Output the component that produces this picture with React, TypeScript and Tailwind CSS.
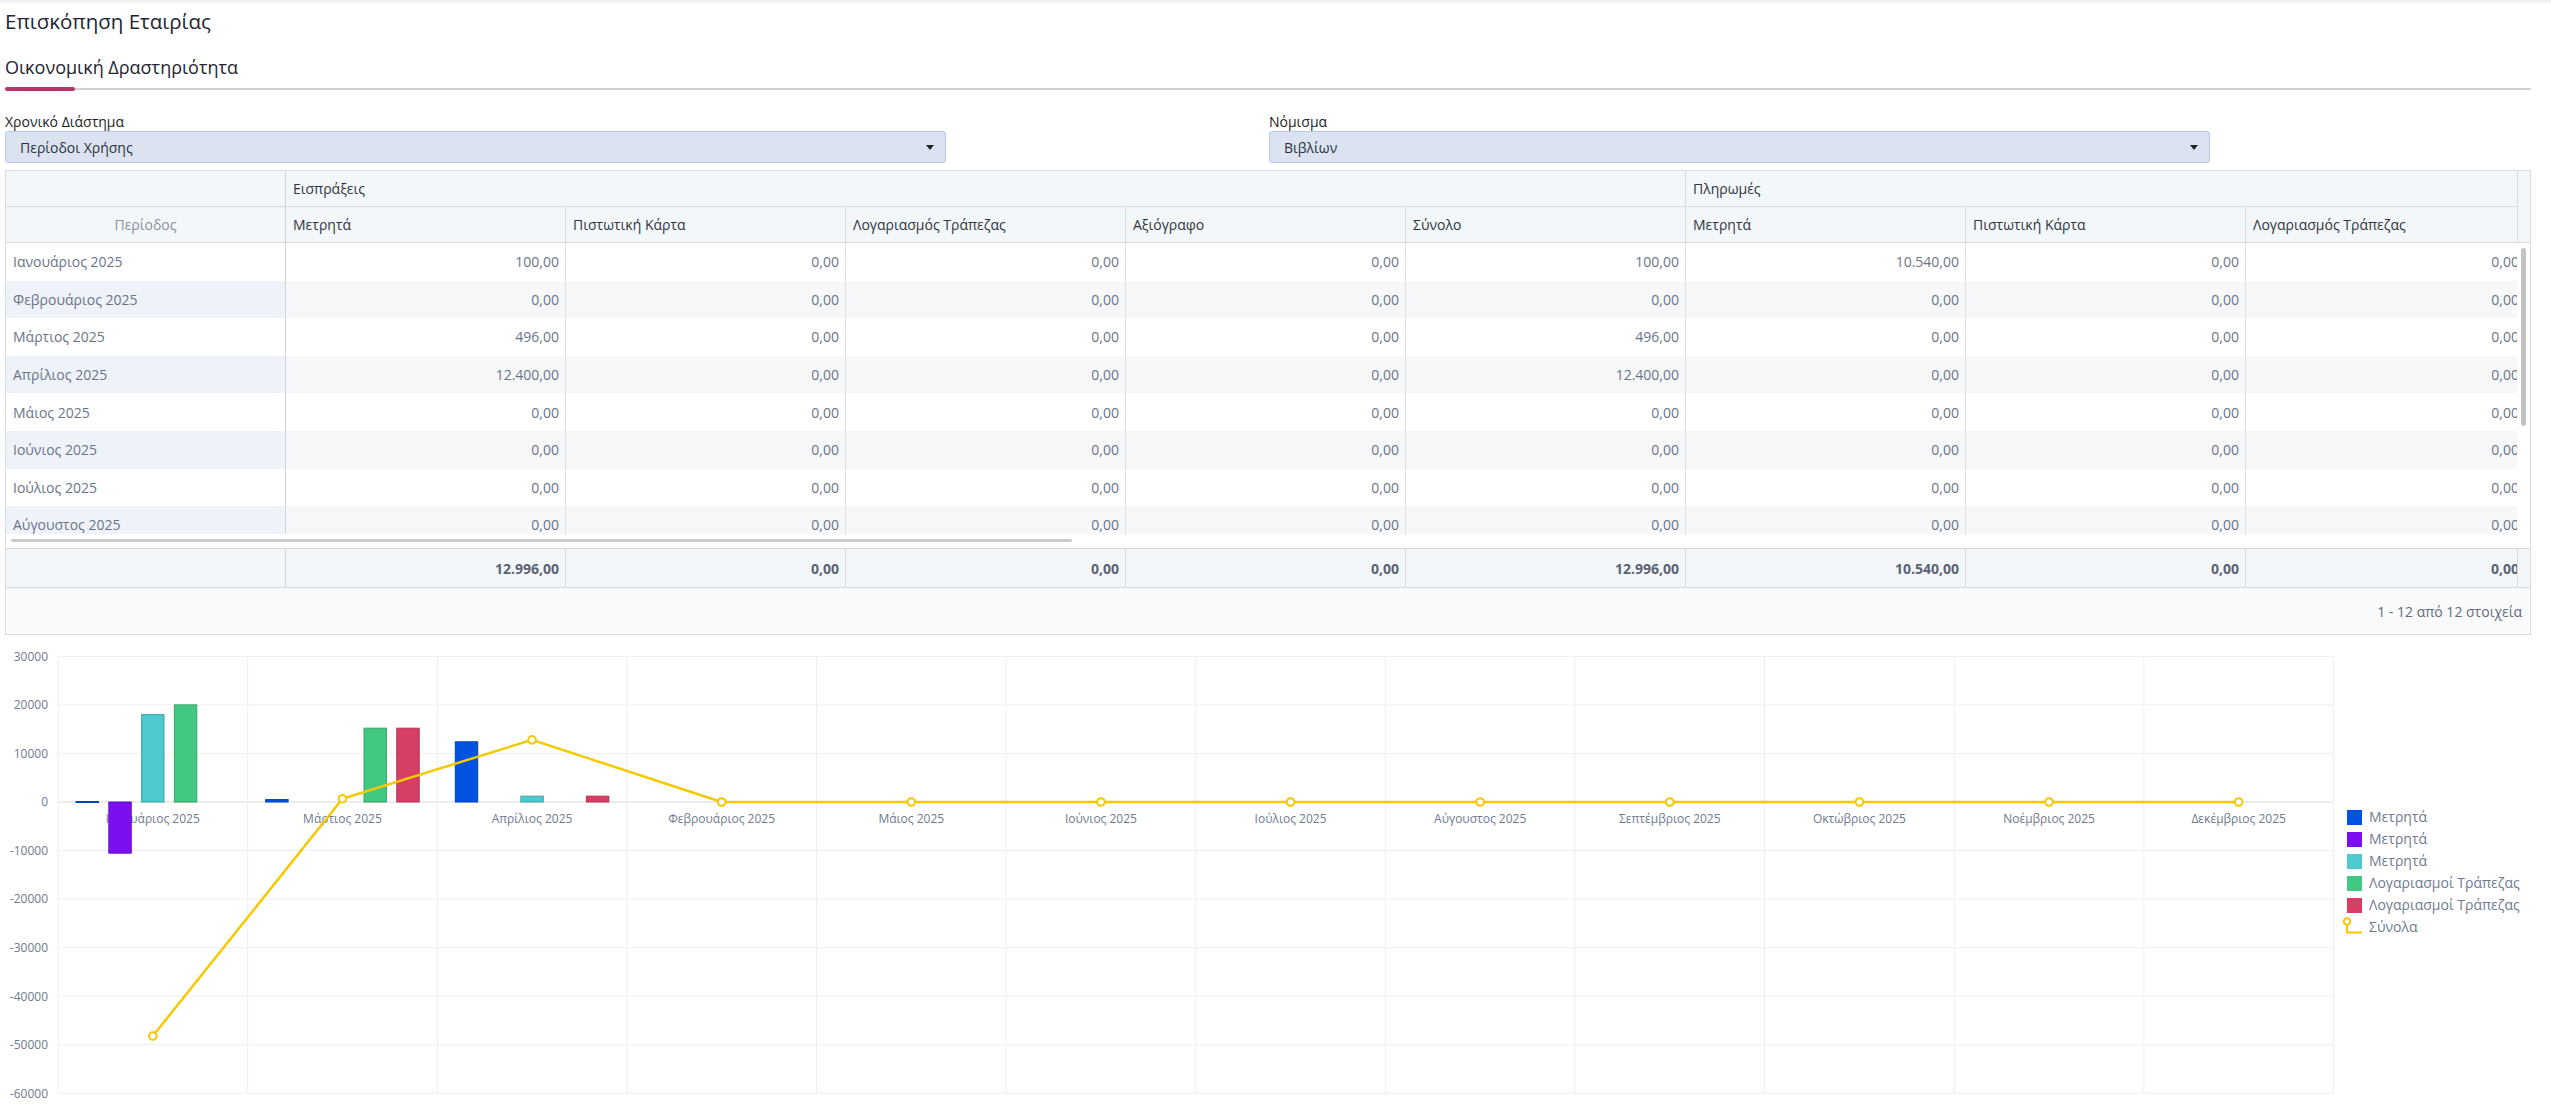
import React from "react";

const periods = [
  "Ιανουάριος 2025",
  "Φεβρουάριος 2025",
  "Μάρτιος 2025",
  "Απρίλιος 2025",
  "Μάιος 2025",
  "Ιούνιος 2025",
  "Ιούλιος 2025",
  "Αύγουστος 2025",
  "Σεπτέμβριος 2025",
  "Οκτώβριος 2025",
  "Νοέμβριος 2025",
  "Δεκέμβριος 2025",
];

const Z = "0,00";
const rows: string[][] = periods.map((_, i) => {
  if (i === 0) return ["100,00", Z, Z, Z, "100,00", "10.540,00", Z, Z];
  if (i === 2) return ["496,00", Z, Z, Z, "496,00", Z, Z, Z];
  if (i === 3) return ["12.400,00", Z, Z, Z, "12.400,00", Z, Z, Z];
  return [Z, Z, Z, Z, Z, Z, Z, Z];
});

const headers = [
  "Μετρητά",
  "Πιστωτική Κάρτα",
  "Λογαριασμός Τράπεζας",
  "Αξιόγραφο",
  "Σύνολο",
  "Μετρητά",
  "Πιστωτική Κάρτα",
  "Λογαριασμός Τράπεζας",
];

const totals = ["12.996,00", Z, Z, Z, "12.996,00", "10.540,00", Z, Z];

const categories = [
  "Ιανουάριος 2025",
  "Μάρτιος 2025",
  "Απρίλιος 2025",
  "Φεβρουάριος 2025",
  "Μάιος 2025",
  "Ιούνιος 2025",
  "Ιούλιος 2025",
  "Αύγουστος 2025",
  "Σεπτέμβριος 2025",
  "Οκτώβριος 2025",
  "Νοέμβριος 2025",
  "Δεκέμβριος 2025",
];

const series = [
  { name: "Μετρητά", fill: "#0052e0", stroke: "#0043b8", data: [100, 496, 12400, 0, 0, 0, 0, 0, 0, 0, 0, 0] },
  { name: "Μετρητά", fill: "#7b0ff0", stroke: "#650cc8", data: [-10540, 0, 0, 0, 0, 0, 0, 0, 0, 0, 0, 0] },
  { name: "Μετρητά", fill: "#4fc8cf", stroke: "#3ea4aa", data: [18000, 0, 1200, 0, 0, 0, 0, 0, 0, 0, 0, 0] },
  { name: "Λογαριασμοί Τράπεζας", fill: "#43c884", stroke: "#35a46b", data: [20000, 15200, 0, 0, 0, 0, 0, 0, 0, 0, 0, 0] },
  { name: "Λογαριασμοί Τράπεζας", fill: "#d63e63", stroke: "#b33251", data: [0, 15200, 1200, 0, 0, 0, 0, 0, 0, 0, 0, 0] },
];

const lineData = [-48200, 680, 12800, 0, 0, 0, 0, 0, 0, 0, 0, 0];
const YELLOW = "#f5c800";

const X0 = 58;
const CW = 189.625;
const ZERO = 157;
const K = 0.0048556;
const yOf = (v: number) => ZERO - v * K;
const BW = CW / 8.1;
const BSP = BW * 0.4;
const BOFF = BW * 0.75;

function Chart() {
  const ticks = [30000, 20000, 10000, 0, -10000, -20000, -30000, -40000, -50000, -60000];
  const right = X0 + 12 * CW;
  return (
    <svg width={2347} height={464} className="block shrink-0">
      {ticks.map((t) => (
        <line
          key={"h" + t}
          x1={X0}
          x2={right}
          y1={yOf(t)}
          y2={yOf(t)}
          stroke={t === 0 ? "#dadada" : "#efefef"}
          strokeWidth={1}
        />
      ))}
      {Array.from({ length: 13 }).map((_, i) => (
        <line
          key={"v" + i}
          x1={X0 + i * CW}
          x2={X0 + i * CW}
          y1={yOf(30000)}
          y2={yOf(-60000)}
          stroke="#efefef"
          strokeWidth={1}
        />
      ))}
      {ticks.map((t) => (
        <text
          key={"t" + t}
          x={48}
          y={yOf(t) + 4.3}
          textAnchor="end"
          fontSize={12}
          fill="#6f7a8e"
          fontFamily="'Open Sans', sans-serif"
        >
          {t}
        </text>
      ))}
      {categories.map((c, i) => (
        <text
          key={c}
          x={X0 + i * CW + CW / 2}
          y={178}
          textAnchor="middle"
          fontSize={12}
          fill="#6f7a8e"
          fontFamily="'Open Sans', sans-serif"
        >
          {c}
        </text>
      ))}
      {series.map((s, j) =>
        s.data.map((v, i) => {
          if (v === 0) return null;
          const x = X0 + i * CW + BOFF + j * (BW + BSP);
          const y1 = yOf(v);
          const top = Math.min(y1, ZERO);
          const h = Math.max(Math.abs(y1 - ZERO), 1);
          return (
            <rect
              key={j + "-" + i}
              x={x + 0.5}
              y={top}
              width={BW - 1}
              height={h}
              fill={s.fill}
              stroke={s.stroke}
              strokeWidth={1}
            />
          );
        })
      )}
      <polyline
        points={lineData.map((v, i) => `${X0 + i * CW + CW / 2},${yOf(v)}`).join(" ")}
        fill="none"
        stroke={YELLOW}
        strokeWidth={2.5}
        strokeLinejoin="round"
      />
      {lineData.map((v, i) => (
        <circle
          key={"m" + i}
          cx={X0 + i * CW + CW / 2}
          cy={yOf(v)}
          r={3.8}
          fill="#ffffff"
          stroke={YELLOW}
          strokeWidth={2}
        />
      ))}
    </svg>
  );
}

function Legend() {
  return (
    <div className="mt-[161px] flex flex-col">
      {series.map((s, i) => (
        <div key={i} className="flex h-[22px] items-center gap-[7px]">
          <div className="h-[15px] w-[15px]" style={{ backgroundColor: s.fill }} />
          <span className="text-[14px] leading-none text-[#6f7b90]">{s.name}</span>
        </div>
      ))}
      <div className="flex h-[22px] items-center gap-[7px]">
        <svg width={15} height={22} className="overflow-visible">
          <path d="M0 8.5 V16.5 H15" fill="none" stroke={YELLOW} strokeWidth={2} />
          <circle cx={0} cy={5.5} r={3.2} fill="#ffffff" stroke={YELLOW} strokeWidth={2} />
        </svg>
        <span className="text-[14px] leading-none text-[#6f7b90]">Σύνολα</span>
      </div>
    </div>
  );
}

function Select({ label, value }: { label: string; value: string }) {
  return (
    <div className="flex flex-col">
      <div className="text-[14px] leading-[18px] text-[#222]">{label}</div>
      <div className="flex h-[32px] w-[941px] items-center justify-between rounded-[3px] border border-[#b7c8e4] bg-[#dae3ef] pl-[14px] pr-[11px]">
        <span className="text-[14px] text-[#2c3340]">{value}</span>
        <svg width={8} height={5} viewBox="0 0 8 5">
          <path d="M0 0 H8 L4 5 Z" fill="#222" />
        </svg>
      </div>
    </div>
  );
}

function Table() {
  return (
    <div className="mt-[7px] w-[2526px] border border-[#d9dcdf] text-[14px]">
      <div className="flex border-b border-[#d6d9dd] bg-[#f3f7fa]">
        <div className="w-[280px] shrink-0 border-r border-[#d0d3d7]">
          <div className="h-[36px] border-b border-[#d9dcdf]" />
          <div className="flex h-[35px] items-center justify-center text-[#8a909b]">Περίοδος</div>
        </div>
        <div className="w-[2231px] shrink-0 overflow-hidden">
          <div className="flex h-[36px] w-[2240px] border-b border-[#d9dcdf]">
            <div className="flex w-[1400px] shrink-0 items-center border-r border-[#d9dcdf] pl-[7px] text-[#2f3540]">
              Εισπράξεις
            </div>
            <div className="flex w-[840px] shrink-0 items-center pl-[7px] text-[#2f3540]">Πληρωμές</div>
          </div>
          <div className="flex h-[35px] w-[2240px]">
            {headers.map((h, i) => (
              <div
                key={i}
                className="flex w-[280px] shrink-0 items-center border-r border-[#d9dcdf] pl-[7px] text-[#2f3540]"
              >
                {h}
              </div>
            ))}
          </div>
        </div>
        <div className="w-[13px] shrink-0 border-l border-[#d9dcdf]" />
      </div>
      <div className="flex h-[291px] overflow-hidden">
        <div className="w-[280px] shrink-0 border-r border-[#d0d3d7]">
          {periods.map((p, i) => (
            <div
              key={p}
              className={
                "flex h-[37.6px] items-center pl-[7px] text-[#6b7486] " +
                (i % 2 === 1 ? "bg-[#eef2f9]" : "bg-white")
              }
            >
              {p}
            </div>
          ))}
        </div>
        <div className="w-[2231px] shrink-0 overflow-hidden">
          {rows.map((r, i) => (
            <div
              key={i}
              className={"flex h-[37.6px] w-[2240px] " + (i % 2 === 1 ? "bg-[#f6f7f9]" : "bg-white")}
            >
              {r.map((v, j) => (
                <div
                  key={j}
                  className="flex w-[280px] shrink-0 items-center justify-end border-r border-[#dcdfe3] pr-[6px] text-[#6b7486]"
                >
                  {v}
                </div>
              ))}
            </div>
          ))}
        </div>
        <div className="w-[13px] shrink-0 pl-[4px] pt-[5px]">
          <div className="h-[178px] w-[5px] rounded-full bg-[#c3c3c3]" />
        </div>
      </div>
      <div className="h-[14px] pl-[5px] pt-[5px]">
        <div className="h-[3px] w-[1061px] rounded-full bg-[#c9cbcd]" />
      </div>
      <div className="flex h-[39px] border-t border-[#d6d9dd] bg-[#f3f7fa]">
        <div className="w-[280px] shrink-0 border-r border-[#d0d3d7]" />
        <div className="w-[2231px] shrink-0 overflow-hidden">
          <div className="flex h-full w-[2240px]">
            {totals.map((v, j) => (
              <div
                key={j}
                className="flex w-[280px] shrink-0 items-center justify-end border-r border-[#d9dcdf] pr-[6px] font-bold text-[#5b6373]"
              >
                {v}
              </div>
            ))}
          </div>
        </div>
        <div className="w-[13px] shrink-0 border-l border-[#d9dcdf]" />
      </div>
      <div className="flex h-[47px] items-center justify-end border-t border-[#d6d9dd] bg-[#f9fafc] pr-[8px] text-[#626b7b]">
        1 - 12 από 12 στοιχεία
      </div>
    </div>
  );
}

export default function App() {
  return (
    <div className="h-[1109px] w-[2551px] overflow-hidden bg-white font-['Open_Sans',sans-serif] text-[#333]">
      <div className="h-[5px] bg-gradient-to-b from-[#eeeeee] to-white" />
      <div className="pl-[5px] pr-[20px]">
        <h1 className="mt-[2px] text-[20.5px] leading-[28px] text-[#1f2430]">Επισκόπηση Εταιρίας</h1>
        <h2 className="mt-[20px] text-[18px] leading-[24px] text-[#1f2430]">Οικονομική Δραστηριότητα</h2>
        <div className="mt-[8px] flex h-[4px] items-center">
          <div className="h-[4px] w-[70px] shrink-0 rounded-full bg-[#b9336a]" />
          <div className="h-[2px] flex-1 bg-[#d2d2d2]" />
        </div>
        <div className="mt-[22px] flex">
          <div className="w-[1264px] shrink-0">
            <Select label="Χρονικό Διάστημα" value="Περίοδοι Χρήσης" />
          </div>
          <div className="w-[1264px] shrink-0">
            <Select label="Νόμισμα" value="Βιβλίων" />
          </div>
        </div>
        <Table />
      </div>
      <div className="mt-[10px] flex items-start">
        <Chart />
        <Legend />
      </div>
    </div>
  );
}
